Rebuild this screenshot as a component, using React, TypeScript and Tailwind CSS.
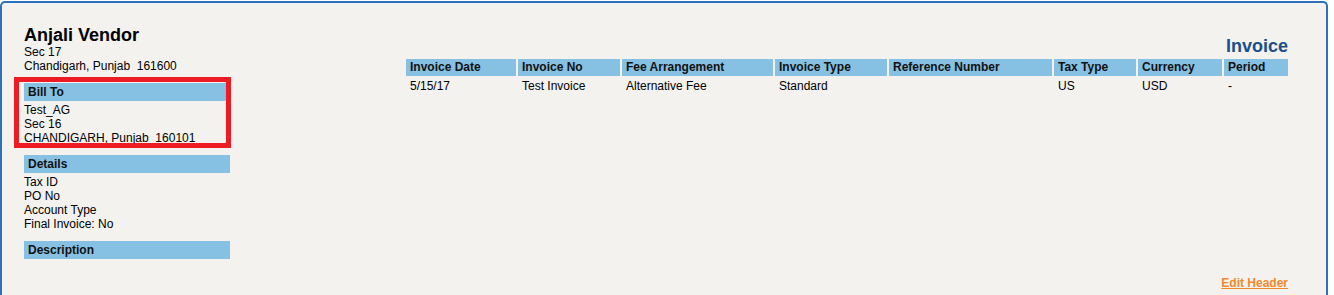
const columns = [
  { label: "Invoice Date", value: "5/15/17" },
  { label: "Invoice No", value: "Test Invoice" },
  { label: "Fee Arrangement", value: "Alternative Fee" },
  { label: "Invoice Type", value: "Standard" },
  { label: "Reference Number", value: "" },
  { label: "Tax Type", value: "US" },
  { label: "Currency", value: "USD" },
  { label: "Period", value: "-" },
];

const SectionBar = ({ title }: { title: string }) => (
  <div className="h-[18px] bg-[#86c1e3] pl-[4px] text-[12px] font-bold leading-[18px] text-[#111]">
    {title}
  </div>
);

const App = () => {
  return (
    <div className="min-h-[295px] bg-white font-['Liberation_Sans',Arial,sans-serif] text-black">
      <div className="mt-px flex h-[294px] w-[1328px] rounded-t-[5px] border-2 border-b-0 border-[#2b72bb] bg-[#f3f2ef] pl-[22px] pr-[38px]">
        {/* left column */}
        <div className="w-[206px] pt-[23px]">
          <h1 className="text-[18px] font-bold leading-[19px]">Anjali Vendor</h1>
          <div className="text-[12px] leading-[14px]">
            <p>Sec 17</p>
            <p>Chandigarh, Punjab&nbsp;&nbsp;161600</p>
          </div>

          <div className="relative mt-[10px]">
            <SectionBar title="Bill To" />
            <div className="pt-[2px] text-[12px] leading-[14px]">
              <p>Test_AG</p>
              <p>Sec 16</p>
              <p>CHANDIGARH, Punjab&nbsp;&nbsp;160101</p>
            </div>
            <div className="pointer-events-none absolute -left-[10px] -top-[6px] h-[71px] w-[217px] border-[5px] border-[#ed1c24]" />
          </div>

          <div className="mt-[10px]">
            <SectionBar title="Details" />
            <div className="pt-[2px] text-[12px] leading-[14px]">
              <p>Tax ID</p>
              <p>PO No</p>
              <p>Account Type</p>
              <p>Final Invoice: No</p>
            </div>
          </div>

          <div className="mt-[10px]">
            <SectionBar title="Description" />
          </div>
        </div>

        {/* right column */}
        <div className="ml-auto flex w-[882px] flex-col pb-[5px] pt-[33px]">
          <h2 className="text-right text-[18px] font-bold leading-[20px] text-[#1c4f8a]">Invoice</h2>
          <div className="mt-[3px] grid grid-cols-[110px_102px_151px_112px_163px_82px_84px_64px] gap-x-[2px] text-[12px]">
            {columns.map((c) => (
              <div key={c.label} className="h-[17px] bg-[#86c1e3] pl-[4px] font-bold leading-[17px] text-[#111]">
                {c.label}
              </div>
            ))}
            {columns.map((c) => (
              <div key={c.label + "-v"} className="pl-[4px] pt-[3px] leading-[14px]">
                {c.value}
              </div>
            ))}
          </div>
          <div className="mt-auto text-right text-[12px] leading-[14px]">
            <a href="#" className="font-bold text-[#f0892d] underline">Edit Header</a>
          </div>
        </div>
      </div>
    </div>
  );
};

export default App;
